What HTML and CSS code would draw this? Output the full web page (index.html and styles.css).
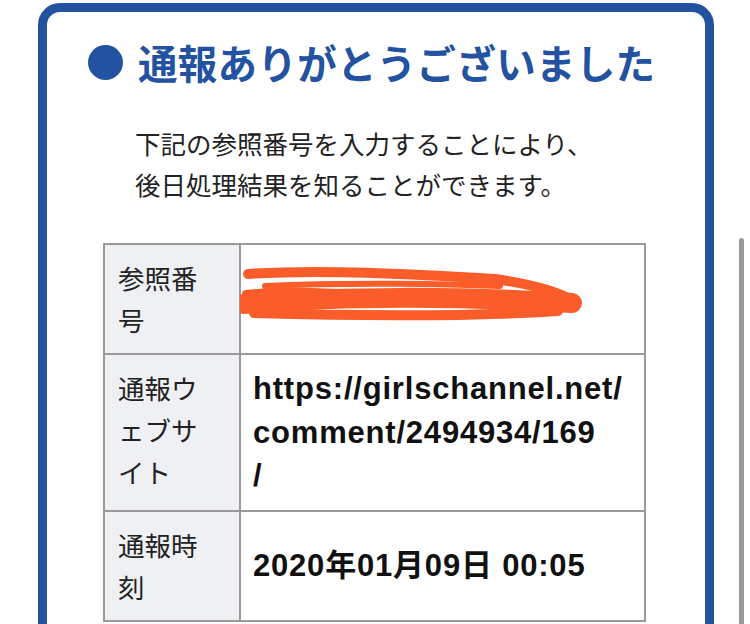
FILE: index.html
```html
<!DOCTYPE html>
<html lang="ja">
<head>
<meta charset="utf-8">
<link rel="stylesheet" href="styles.css">
</head>
<body>
<div class="card">
  <h1 class="title"><span class="dot"></span>通報ありがとうございました</h1>
  <p class="lead">下記の参照番号を入力することにより、<br>後日処理結果を知ることができます。</p>
  <table class="info">
    <tr>
      <th>参照番号</th>
      <td class="redacted-cell">
        <svg class="scribble" width="345" height="60" viewBox="0 0 345 60">
          <path d="M8 8 C80 3 170 8 255 13 C290 18 320 26 335 36" stroke="#fb5d2a" stroke-width="10" fill="none" stroke-linecap="round"/>
          <path d="M25 20 C110 16 210 18 260 20" stroke="#fb5d2a" stroke-width="6" fill="none" stroke-linecap="round"/>
          <path d="M4 38 C100 30 220 30 332 37" stroke="#fb5d2a" stroke-width="20" fill="none" stroke-linecap="round"/>
          <path d="M14 47 C120 50 240 50 318 45" stroke="#fb5d2a" stroke-width="10" fill="none" stroke-linecap="round"/>
          <path d="M6 28 C40 24 80 26 120 28" stroke="#fb5d2a" stroke-width="8" fill="none" stroke-linecap="round"/>
        </svg>
      </td>
    </tr>
    <tr>
      <th>通報ウェブサイト</th>
      <td>https://girlschannel.net/<br>comment/2494934/169<br>/</td>
    </tr>
    <tr>
      <th>通報時刻</th>
      <td>2020年01月09日 00:05</td>
    </tr>
  </table>
</div>
<div class="scrollbar"></div>
</body>
</html>
```

FILE: styles.css
```css
html, body {
  margin: 0;
  padding: 0;
  background: #ffffff;
  height: 100%;
  overflow: hidden;
}
body {
  font-family: "Noto Sans CJK JP", "Noto Sans", sans-serif;
  color: #1a1a1a;
}
.card {
  margin: 3px 0 0 38px;
  width: 676px;
  border: 9px solid #2353a0;
  border-radius: 22px;
  background: #fff;
  padding: 22px 0 40px;
  box-sizing: border-box;
  height: 680px;
}
.title {
  display: flex;
  align-items: center;
  margin: 0 0 0 41px;
  font-size: 39.5px;
  font-weight: 700;
  color: #2353a0;
  line-height: 56px;
  letter-spacing: 0.3px;
}
.dot {
  width: 35px;
  height: 35px;
  border-radius: 50%;
  background: #2353a0;
  margin-right: 15px;
  flex: none;
}
.lead {
  margin: 32px 0 0 88px;
  font-size: 25.5px;
  line-height: 41px;
  color: #222;
}
.info {
  margin: 39px 0 0 56px;
  width: 543px;
  border-collapse: collapse;
  table-layout: fixed;
}
.info th, .info td {
  border: 2px solid #9a9a9a;
  padding: 12px 12px;
}
.info th {
  width: 86px;
  padding-left: 13px;
  padding-right: 35px;
  background: #eef0f4;
  font-weight: 400;
  text-align: left;
  vertical-align: top;
  font-size: 26.5px;
  line-height: 42px;
  color: #222;
}
.info td {
  font-family: "Liberation Sans", Arial, "Noto Sans CJK JP", sans-serif;
  font-weight: 700;
  font-size: 31px;
  letter-spacing: 0.8px;
  line-height: 43.5px;
  vertical-align: middle;
  color: #111;
  white-space: nowrap;
}
.redacted-cell {
  vertical-align: top;
}
.scribble {
  display: block;
  margin: -6px 0 0 -13px;
}
.scrollbar {
  position: absolute;
  left: 739px;
  top: 238px;
  width: 5px;
  height: 400px;
  background: #999;
  border-radius: 3px;
}
```
